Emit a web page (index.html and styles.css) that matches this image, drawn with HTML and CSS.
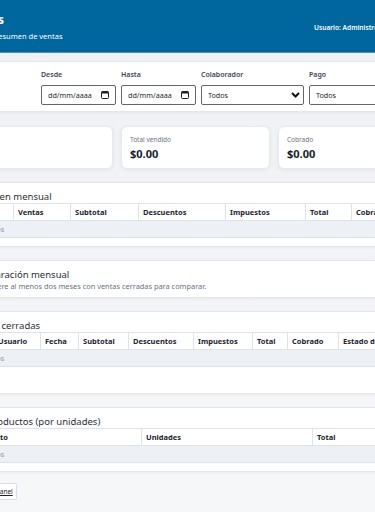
FILE: index.html
```html
<!DOCTYPE html>
<html lang="es">
<head>
    <meta charset="UTF-8">
    <meta name="viewport" content="width=device-width, initial-scale=1.0">
    <title>Reporte de ventas</title>
    <link rel="stylesheet" href="styles.css">
</head>
<body>
<div class="app">
    <header class="topbar">
        <div class="brand">
            <h1>Ventas</h1>
            <p>Panel de resumen de ventas</p>
        </div>
        <div class="user">Usuario: Administrador</div>
    </header>

    <main class="content">
        <!-- filtros -->
        <section class="card filters">
            <div class="field field-date">
                <label>Desde</label>
                <div class="date-input">
                    <span>dd/mm/aaaa</span>
                    <svg width="8" height="8" viewBox="0 0 8 8"><rect x="0.5" y="0.5" width="7" height="7" rx="1" fill="none" stroke="#1f1f1f"/><rect x="0.5" y="0.5" width="7" height="2" fill="#1f1f1f"/></svg>
                </div>
            </div>
            <div class="field field-date">
                <label>Hasta</label>
                <div class="date-input">
                    <span>dd/mm/aaaa</span>
                    <svg width="8" height="8" viewBox="0 0 8 8"><rect x="0.5" y="0.5" width="7" height="7" rx="1" fill="none" stroke="#1f1f1f"/><rect x="0.5" y="0.5" width="7" height="2" fill="#1f1f1f"/></svg>
                </div>
            </div>
            <div class="field field-collab">
                <label for="colaborador">Colaborador</label>
                <div class="select-wrap">
                    <select id="colaborador"><option>Todos</option></select>
                    <svg class="chevron" width="9" height="6" viewBox="0 0 9 6"><path d="M1 1l3.5 3.5L8 1" fill="none" stroke="#111" stroke-width="2"/></svg>
                </div>
            </div>
            <div class="field field-pay">
                <label for="pago">Pago</label>
                <div class="select-wrap">
                    <select id="pago"><option>Todos</option></select>
                    <svg class="chevron" width="9" height="6" viewBox="0 0 9 6"><path d="M1 1l3.5 3.5L8 1" fill="none" stroke="#111" stroke-width="2"/></svg>
                </div>
            </div>
        </section>

        <!-- totales -->
        <section class="stats">
            <div class="stat">
                <span class="stat-label">Ventas</span>
                <strong>0</strong>
            </div>
            <div class="stat">
                <span class="stat-label">Total vendido</span>
                <strong>$0.00</strong>
            </div>
            <div class="stat">
                <span class="stat-label">Cobrado</span>
                <strong>$0.00</strong>
            </div>
        </section>

        <section class="card panel">
            <h2>Resumen mensual</h2>
            <table class="grid grid-monthly">
                <thead>
                    <tr><th>Mes</th><th>Ventas</th><th>Subtotal</th><th>Descuentos</th><th>Impuestos</th><th>Total</th><th>Cobrado</th></tr>
                </thead>
                <tbody>
                    <tr><td class="empty" colspan="7">Sin datos</td></tr>
                </tbody>
            </table>
        </section>

        <section class="card panel panel-text">
            <h2>Comparación mensual</h2>
            <p class="hint">Se requiere al menos dos meses con ventas cerradas para comparar.</p>
        </section>

        <section class="card panel panel-scroll">
            <h2>Ventas cerradas</h2>
            <table class="grid grid-closed">
                <thead>
                    <tr><th>#</th><th>Usuario</th><th>Fecha</th><th>Subtotal</th><th>Descuentos</th><th>Impuestos</th><th>Total</th><th>Cobrado</th><th>Estado de pago</th></tr>
                </thead>
                <tbody>
                    <tr><td class="empty" colspan="9">Sin datos</td></tr>
                </tbody>
            </table>
        </section>

        <section class="card panel">
            <h2>Top productos (por unidades)</h2>
            <table class="grid grid-products">
                <thead>
                    <tr><th>Producto</th><th>Unidades</th><th>Total</th></tr>
                </thead>
                <tbody>
                    <tr><td class="empty" colspan="3">Sin datos</td></tr>
                </tbody>
            </table>
        </section>

        <div class="footer-actions">
            <a class="back-link" href="#">Volver al panel</a>
        </div>
    </main>
</div>
</body>
</html>
```

FILE: styles.css
```css
body {
    margin: 0;
    min-height: 512px;
    display: flex;
    justify-content: center;
    font-family: "Noto Sans", "Open Sans", sans-serif;
    color: #222;
    background: linear-gradient(#eef0f4, #f6f7f9);
    overflow: hidden;
}
.app {
    width: 479px;
    flex-shrink: 0;
}
.topbar {
    height: 53px;
    box-sizing: border-box;
    padding: 0 38px 0 15px;
    display: flex;
    align-items: center;
    justify-content: space-between;
    background-color: #00679e;
    border-bottom: 1px solid #4b8fb8;
    color: #fff;
}
.brand h1 {
    margin: 0;
    font-size: 12px;
    line-height: 15px;
    font-weight: 700;
}
.brand p {
    margin: 4px 0 0;
    font-size: 7.5px;
    line-height: 10px;
}
.user {
    font-size: 6.6px;
    font-weight: 600;
    margin-top: 2px;
}
.content {
    padding: 8px 0 12px 16px;
    display: flex;
    flex-direction: column;
    gap: 13px;
}
.card {
    background-color: #fff;
    border: 1px solid #e3e7ed;
    border-radius: 4px;
    box-shadow: 0 1px 3px rgba(20, 30, 50, 0.05);
}
.filters {
    display: flex;
    justify-content: flex-end;
    gap: 5px;
    padding: 8px 10px 6px;
}
.field label {
    display: block;
    font-size: 7px;
    line-height: 9px;
    font-weight: 600;
    color: #3d4756;
    margin-bottom: 6px;
}
.field-date { width: 75px; }
.field-collab { width: 103px; }
.field-pay { width: 107px; }
.date-input, .select-wrap select {
    height: 20px;
    box-sizing: border-box;
    border: 1px solid #666;
    border-radius: 2px;
    background: #fff;
    font-family: inherit;
    font-size: 7.2px;
    color: #1f1f1f;
}
.date-input {
    display: flex;
    align-items: center;
    justify-content: space-between;
    padding: 0 6px;
}
.select-wrap {
    position: relative;
}
.select-wrap select {
    display: block;
    width: 100%;
    padding: 0 6px;
    appearance: none;
    -webkit-appearance: none;
}
.chevron {
    position: absolute;
    right: 4px;
    top: 7px;
}
.stats {
    display: grid;
    grid-template-columns: repeat(3, 149px);
    gap: 8px;
    margin-top: 1px;
}
.stat {
    height: 43px;
    box-sizing: border-box;
    padding: 8px 8px 0;
    background-color: #fff;
    border: 1px solid #e6e9ee;
    border-radius: 6px;
    box-shadow: 0 1px 4px rgba(20, 30, 50, 0.06);
}
.stat-label {
    display: block;
    font-size: 6.5px;
    line-height: 9px;
    color: #6b7280;
}
.stat strong {
    display: block;
    margin-top: 3px;
    font-size: 11px;
    line-height: 14px;
    color: #151b2c;
}
.panel {
    padding: 7px 10px 8px 4px;
}
.panel-text {
    padding-bottom: 6px;
}
.panel-scroll {
    padding-bottom: 26px;
}
.panel h2 {
    margin: 0;
    font-size: 9.5px;
    line-height: 13px;
    font-weight: 400;
    color: #2b2f36;
}
.hint {
    margin: 0;
    font-size: 7.4px;
    line-height: 10px;
    color: #6b7280;
}
.grid {
    width: 100%;
    table-layout: fixed;
    border-collapse: collapse;
}
.grid th, .grid td {
    box-sizing: border-box;
    height: 17px;
    padding: 0 4px;
    border: 1px solid #dde3ea;
    text-align: left;
}
.grid th {
    font-size: 7.5px;
    font-weight: 700;
    color: #1c2230;
    white-space: nowrap;
    overflow: hidden;
}
.grid td.empty {
    background-color: #edf1f6;
    font-size: 7px;
    color: #8a93a0;
}
.grid-monthly th:nth-child(1) { width: 44px; }
.grid-monthly th:nth-child(2) { width: 57px; }
.grid-monthly th:nth-child(3) { width: 68px; }
.grid-monthly th:nth-child(4) { width: 87px; }
.grid-monthly th:nth-child(5) { width: 80px; }
.grid-monthly th:nth-child(6) { width: 46px; }
.grid-closed th:nth-child(1) { width: 24px; }
.grid-closed th:nth-child(2) { width: 47px; }
.grid-closed th:nth-child(3) { width: 38px; }
.grid-closed th:nth-child(4) { width: 50px; }
.grid-closed th:nth-child(5) { width: 65px; }
.grid-closed th:nth-child(6) { width: 59px; }
.grid-closed th:nth-child(7) { width: 35px; }
.grid-closed th:nth-child(8) { width: 51px; }
.grid-products th:nth-child(1) { width: 172px; }
.grid-products th:nth-child(2) { width: 171px; }
.footer-actions {
    display: flex;
    margin-top: -2px;
}
.back-link {
    padding: 3px 3px;
    font-size: 6.5px;
    line-height: 9px;
    color: #1c2230;
    background-color: #fff;
    border: 1px solid #d9dee6;
    border-radius: 2px;
}
```
